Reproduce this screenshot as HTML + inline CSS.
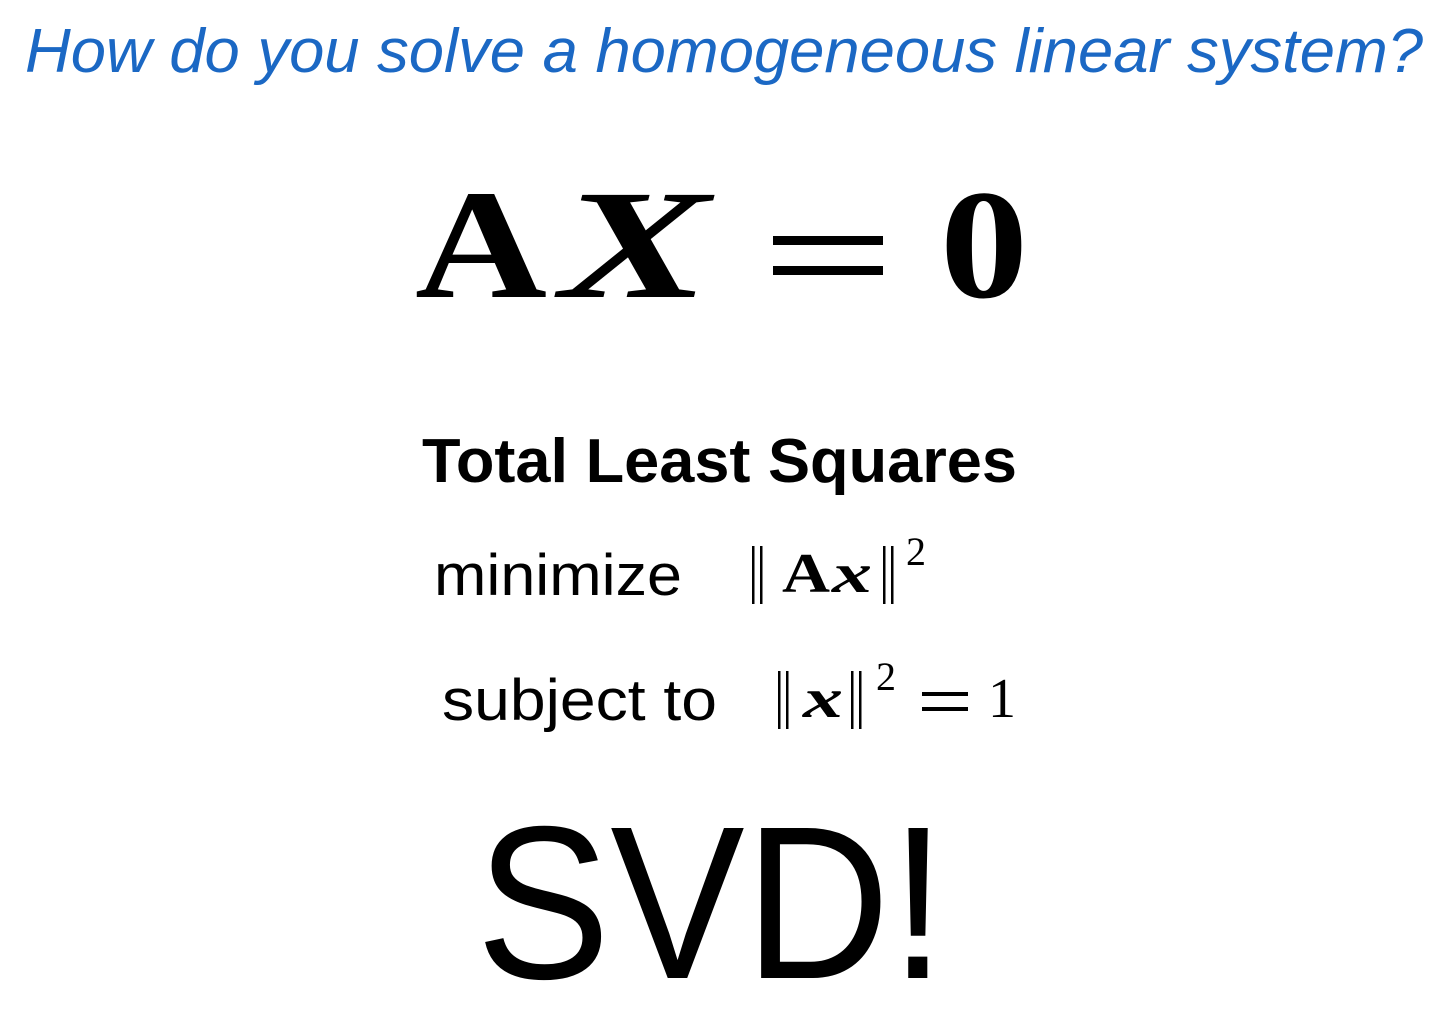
<!DOCTYPE html>
<html><head><meta charset="utf-8"><style>
html,body{margin:0;padding:0;background:#fff;}
svg{display:block;}
</style></head><body>
<svg width="1443" height="1021" viewBox="0 0 1443 1021" xmlns="http://www.w3.org/2000/svg">
<text x="25" y="72" font-family="Liberation Sans, sans-serif" font-style="italic" font-size="62" fill="#1b68c4" textLength="1398" lengthAdjust="spacingAndGlyphs">How do you solve a homogeneous linear system?</text>
<g font-family="Liberation Serif, serif" font-weight="bold" fill="#000">
<text x="415" y="297" font-size="156" textLength="132" lengthAdjust="spacingAndGlyphs">A</text>
<text x="560" y="297" font-size="156" font-style="italic" textLength="150" lengthAdjust="spacingAndGlyphs">X</text>
<rect x="773" y="236" width="110" height="9"/>
<rect x="773" y="266" width="110" height="9"/>
<text x="940" y="297" font-size="156" textLength="88" lengthAdjust="spacingAndGlyphs">0</text>
</g>
<text x="422" y="482" font-family="Liberation Sans, sans-serif" font-weight="bold" font-size="62" fill="#000" textLength="595" lengthAdjust="spacingAndGlyphs">Total Least Squares</text>
<text x="434" y="595" font-family="Liberation Sans, sans-serif" font-size="58" fill="#000" textLength="248" lengthAdjust="spacingAndGlyphs">minimize</text>
<g font-family="Liberation Serif, serif" fill="#000">
<rect x="752" y="546" width="2.5" height="58"/><rect x="760" y="546" width="2.5" height="58"/>
<text x="782" y="592" font-size="56" font-weight="bold" textLength="48" lengthAdjust="spacingAndGlyphs">A</text>
<text x="832" y="592" font-size="56" font-weight="bold" font-style="italic" textLength="40" lengthAdjust="spacingAndGlyphs">x</text>
<rect x="883" y="546" width="2.5" height="58"/><rect x="891" y="546" width="2.5" height="58"/>
<text x="906" y="565" font-size="40">2</text>
</g>
<text x="442" y="720" font-family="Liberation Sans, sans-serif" font-size="58" fill="#000" textLength="275" lengthAdjust="spacingAndGlyphs">subject to</text>
<g font-family="Liberation Serif, serif" fill="#000">
<rect x="778" y="671" width="2.5" height="58"/><rect x="786" y="671" width="2.5" height="58"/>
<text x="803" y="717" font-size="56" font-weight="bold" font-style="italic" textLength="40" lengthAdjust="spacingAndGlyphs">x</text>
<rect x="851" y="671" width="2.5" height="58"/><rect x="859" y="671" width="2.5" height="58"/>
<text x="876" y="690" font-size="40">2</text>
<rect x="922" y="692" width="46" height="4"/>
<rect x="922" y="707" width="46" height="4"/>
<text x="988" y="717" font-size="56">1</text>
</g>
<text x="476" y="978" font-family="Liberation Sans, sans-serif" font-size="218" fill="#000" textLength="470" lengthAdjust="spacingAndGlyphs">SVD!</text>
</svg>
</body></html>
